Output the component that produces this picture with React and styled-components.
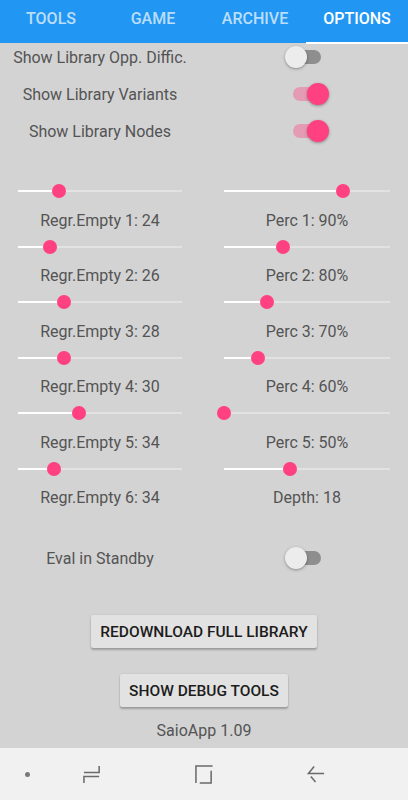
import React from "react";
import styled, { createGlobalStyle } from "styled-components";

const GlobalStyle = createGlobalStyle`
  html, body {
    margin: 0;
    padding: 0;
    background: #d3d3d3;
    font-family: Roboto, "Noto Sans", "Liberation Sans", sans-serif;
  }
`;

const tabs = ["TOOLS", "GAME", "ARCHIVE", "OPTIONS"];

const toggles = [
  { label: "Show Library Opp. Diffic.", on: false },
  { label: "Show Library Variants", on: true },
  { label: "Show Library Nodes", on: true },
];

// fractions of the track where the thumb sits
const sliders = [
  ["Regr.Empty 1: 24", 0.248, "Perc 1: 90%", 0.715],
  ["Regr.Empty 2: 26", 0.197, "Perc 2: 80%", 0.358],
  ["Regr.Empty 3: 28", 0.283, "Perc 3: 70%", 0.262],
  ["Regr.Empty 4: 30", 0.283, "Perc 4: 60%", 0.205],
  ["Regr.Empty 5: 34", 0.372, "Perc 5: 50%", 0],
  ["Regr.Empty 6: 34", 0.221, "Depth: 18", 0.4],
];

const App = () => {
  return (
    <>
      <GlobalStyle />
      <Screen>
        <TabBar>
          {tabs.map((t) => (
            <Tab key={t} $active={t === "OPTIONS"}>
              {t}
              {t === "OPTIONS" && <Indicator />}
            </Tab>
          ))}
        </TabBar>

        <Content>
          <ToggleList>
            {toggles.map((t) => (
              <TwoCol key={t.label}>
                <Label>{t.label}</Label>
                <Centered>
                  <Switch on={t.on} />
                </Centered>
              </TwoCol>
            ))}
          </ToggleList>

          <SliderGrid>
            {sliders.map(([l, lv, r, rv]) => (
              <React.Fragment key={l}>
                <Slider value={lv} />
                <Slider value={rv} />
                <SliderLabel>{l}</SliderLabel>
                <SliderLabel>{r}</SliderLabel>
              </React.Fragment>
            ))}
          </SliderGrid>

          <StandbyRow>
            <Label>Eval in Standby</Label>
            <Centered>
              <Switch on={false} />
            </Centered>
          </StandbyRow>

          <ActionButton $top={43}>REDOWNLOAD FULL LIBRARY</ActionButton>
          <ActionButton $top={26}>SHOW DEBUG TOOLS</ActionButton>
          <Version>SaioApp 1.09</Version>
        </Content>

        <NavBar>
          <NavDot />
          <NavIcon viewBox="0 0 20 20">
            <path d="M17 1 V8 H1" />
            <path d="M1 19 V12 H17" />
          </NavIcon>
          <NavIcon viewBox="0 0 20 20">
            <path d="M18.5 1 H1 V19" />
            <path d="M5 19 H17 V6" />
          </NavIcon>
          <NavIcon viewBox="0 0 20 20">
            <path d="M18 9 H1.5 L7.5 1.5" />
            <path d="M4 12 L9 18" />
          </NavIcon>
        </NavBar>
      </Screen>
    </>
  );
};

const Switch = ({ on }) => (
  <SwitchBox>
    <SwitchTrack $on={on} />
    <SwitchThumb $on={on} />
  </SwitchBox>
);

const Slider = ({ value }) => (
  <SliderBox>
    <SliderTrack>
      <SliderFill style={{ width: `${value * 100}%` }} />
      <SliderThumb style={{ left: `${value * 100}%` }} />
    </SliderTrack>
  </SliderBox>
);

const Screen = styled.div`
  display: flex;
  flex-direction: column;
  width: 408px;
  height: 800px;
  overflow: hidden;
`;

const TabBar = styled.div`
  display: grid;
  grid-template-columns: repeat(4, 1fr);
  height: 43px;
  background: #2196f3;
  flex-shrink: 0;
`;

const Tab = styled.div`
  position: relative;
  display: flex;
  align-items: center;
  justify-content: center;
  padding-bottom: 7px;
  font-size: 16px;
  font-weight: 500;
  color: ${({ $active }) => ($active ? "#ffffff" : "rgba(255,255,255,0.7)")};
`;

const Indicator = styled.div`
  position: absolute;
  left: 0;
  right: 0;
  bottom: -1px;
  height: 2px;
  background: #ffffff;
`;

const Content = styled.div`
  flex: 1;
  display: flex;
  flex-direction: column;
  align-items: stretch;
`;

const ToggleList = styled.div`
  display: flex;
  flex-direction: column;
  gap: 9px;
`;

const TwoCol = styled.div`
  display: grid;
  grid-template-columns: 200px 1fr;
  column-gap: 6px;
  align-items: center;
  height: 28px;
`;

const StandbyRow = styled(TwoCol)`
  margin-top: 34px;
`;

const Label = styled.div`
  text-align: center;
  font-size: 16px;
  color: #545454;
  white-space: nowrap;
`;

const Centered = styled.div`
  display: flex;
  justify-content: center;
`;

const SwitchBox = styled.div`
  position: relative;
  width: 44px;
  height: 22px;
`;

const SwitchTrack = styled.div`
  position: absolute;
  left: 8px;
  right: 8px;
  top: 4px;
  height: 14px;
  border-radius: 7px;
  background: ${({ $on }) => ($on ? "rgba(255,64,129,0.38)" : "#8e8e8e")};
`;

const SwitchThumb = styled.div`
  position: absolute;
  top: 0;
  left: ${({ $on }) => ($on ? "22px" : "0")};
  width: 22px;
  height: 22px;
  border-radius: 50%;
  background: ${({ $on }) => ($on ? "#ff4081" : "#ececec")};
  box-shadow: 0 1px 3px rgba(0, 0, 0, 0.35);
`;

const SliderGrid = styled.div`
  display: grid;
  grid-template-columns: 200px 1fr;
  column-gap: 6px;
  grid-auto-rows: 28px 27.5px;
  margin-top: 32px;
`;

const SliderBox = styled.div`
  display: flex;
  align-items: center;
  padding: 0 18px;
`;

const SliderTrack = styled.div`
  position: relative;
  flex: 1;
  height: 2px;
  background: #e2e2e2;
`;

const SliderFill = styled.div`
  height: 100%;
  background: #ffffff;
`;

const SliderThumb = styled.div`
  position: absolute;
  top: 50%;
  width: 14px;
  height: 14px;
  border-radius: 50%;
  background: #ff4081;
  transform: translate(-50%, -50%);
`;

const SliderLabel = styled.div`
  display: flex;
  align-items: center;
  justify-content: center;
  padding-top: 3px;
  font-size: 16px;
  color: #545454;
`;

const ActionButton = styled.button`
  align-self: center;
  margin-top: ${({ $top }) => $top}px;
  height: 33px;
  padding: 0 9px;
  border: none;
  border-radius: 2px;
  background: #e2e2e2;
  box-shadow: 0 2px 2px rgba(0, 0, 0, 0.24), 0 0 2px rgba(0, 0, 0, 0.12);
  font-family: Roboto, "Noto Sans", sans-serif;
  font-size: 15.5px;
  font-weight: 500;
  color: #1c1c1c;
`;

const Version = styled.div`
  margin-top: 15px;
  text-align: center;
  line-height: 18px;
  font-size: 16px;
  color: #545454;
`;

const NavBar = styled.div`
  position: relative;
  height: 52px;
  flex-shrink: 0;
  background: #f1f1f1;
  display: grid;
  grid-template-columns: 54px 76px 1fr 76px 54px;
  align-items: center;
`;

const NavDot = styled.div`
  justify-self: center;
  width: 5px;
  height: 5px;
  border-radius: 50%;
  background: #7a7a7a;
`;

const NavIcon = styled.svg`
  justify-self: center;
  width: 19px;
  height: 19px;
  fill: none;
  stroke: #6a6a6a;
  stroke-width: 1.6;
`;

export default App;
